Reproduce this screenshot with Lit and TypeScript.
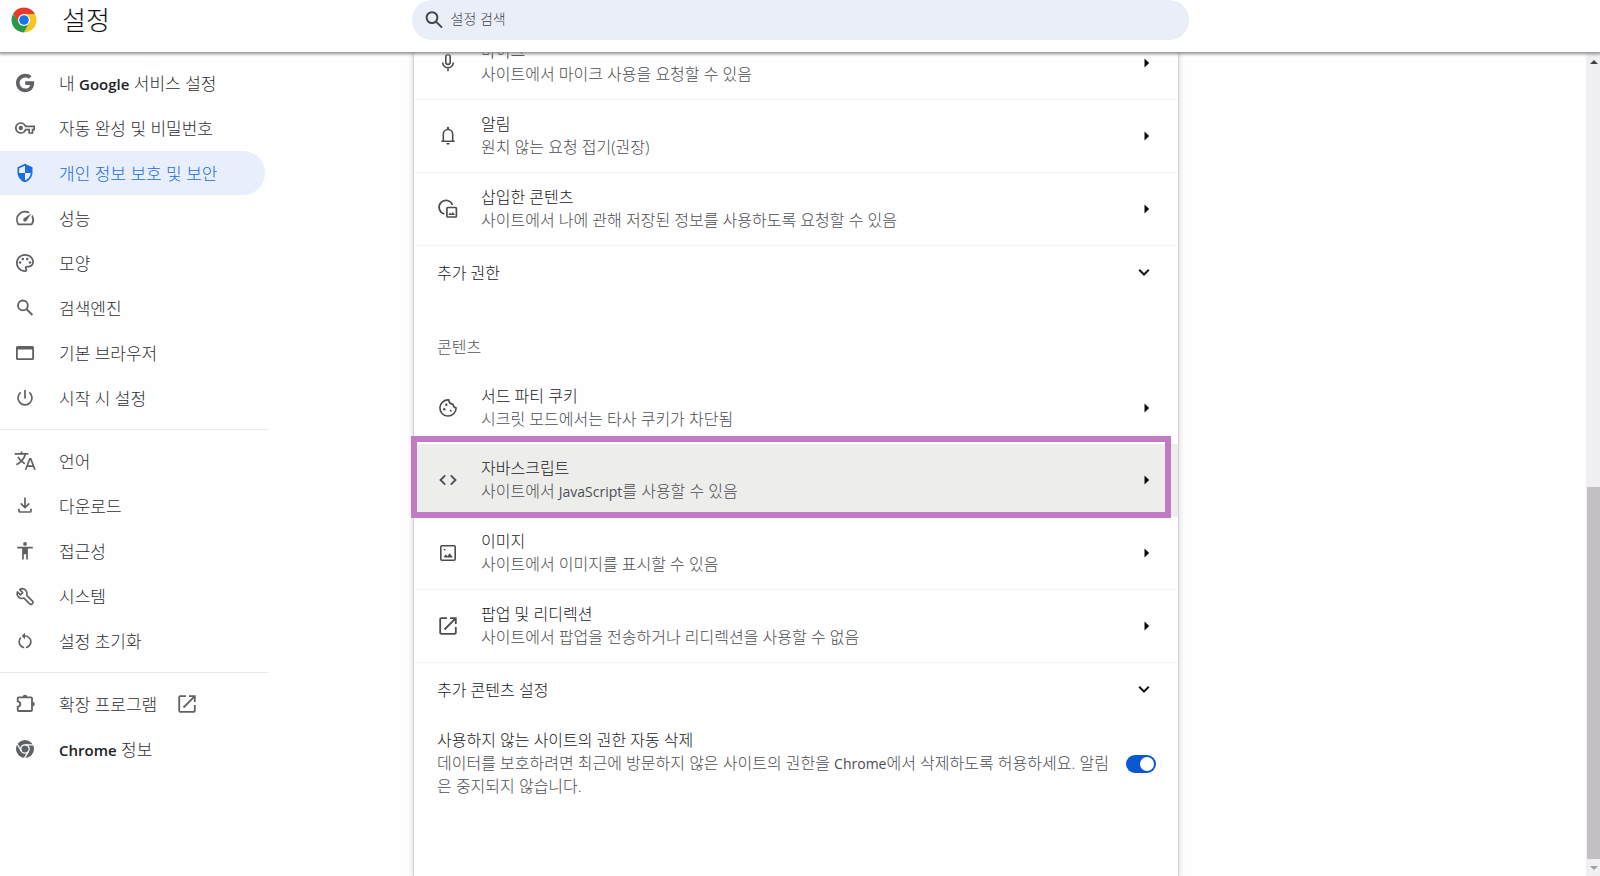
import { LitElement, html, css, svg, nothing, type TemplateResult } from 'lit';
import { customElement, property, state } from 'lit/decorators.js';
import { classMap } from 'lit/directives/class-map.js';

type Glyph = { box?: string; body: TemplateResult };

const SMALL = '-2.4 -2.4 28.8 28.8';
const MEDIUM = '-1.3 -1.3 26.6 26.6';

const GLYPHS: Record<string, Glyph> = {
  google: {
    box: '-0.65 -0.9 25.8 25.8',
    body: svg`<path d="M12.545 10.239v3.821h5.445c-.712 2.315-2.647 3.972-5.445 3.972a6.033 6.033 0 110-12.064c1.498 0 2.866.549 3.921 1.453l2.814-2.814A9.969 9.969 0 0012.545 2C7.021 2 2.543 6.477 2.543 12s4.478 10 10.002 10c8.396 0 10.249-7.85 9.426-11.748z"/>`,
  },
  key: {
    box: SMALL,
    body: svg`<path d="M22 19h-6v-4h-2.68A6.99 6.99 0 017 19c-3.86 0-7-3.14-7-7s3.14-7 7-7c2.72 0 5.17 1.58 6.32 4H24v6h-2v4zm-4-2h2v-4h2v-2H11.94l-.23-.67A5.008 5.008 0 007 7c-2.76 0-5 2.24-5 5s2.24 5 5 5a5.008 5.008 0 004.71-3.33l.23-.67H18v4zM7 14.6a2.6 2.6 0 110-5.2 2.6 2.6 0 010 5.2z"/>`,
  },
  shield: {
    box: SMALL,
    body: svg`<path d="M12 1L3 5v6c0 5.55 3.84 10.74 9 12 5.16-1.26 9-6.45 9-12V5l-9-4zm0 10.99h7c-.53 4.12-3.28 7.79-7 8.94V12H5V6.3l7-3.11v8.8z"/>`,
  },
  speed: {
    box: MEDIUM,
    body: svg`<path d="M20.38 8.57l-1.23 1.85a8 8 0 01-.22 7.58H5.07A8 8 0 0115.58 6.85l1.85-1.23A10 10 0 003.35 19a2 2 0 001.72 1h13.85a2 2 0 001.74-1 10 10 0 00-.27-10.44zm-9.79 6.84a2 2 0 002.83 0l5.66-8.49-8.49 5.66a2 2 0 000 2.83z"/>`,
  },
  palette: {
    box: MEDIUM,
    body: svg`<path d="M12 22C6.49 22 2 17.51 2 12S6.49 2 12 2s10 4.04 10 9c0 3.31-2.69 6-6 6h-1.77c-.28 0-.5.22-.5.5 0 .12.05.23.13.33.41.47.64 1.06.64 1.67A2.5 2.5 0 0112 22zm0-18c-4.41 0-8 3.59-8 8s3.59 8 8 8c.28 0 .5-.22.5-.5a.54.54 0 00-.14-.35c-.41-.46-.63-1.05-.63-1.65a2.5 2.5 0 012.5-2.5H16c2.21 0 4-1.79 4-4 0-3.86-3.59-7-8-7z"/><circle cx="6.5" cy="11.5" r="1.4"/><circle cx="9.5" cy="7.5" r="1.4"/><circle cx="14.5" cy="7.5" r="1.4"/><circle cx="17.5" cy="11.5" r="1.4"/>`,
  },
  search: {
    body: svg`<g fill="none" stroke="currentColor" stroke-width="1.8"><circle cx="9.9" cy="9.4" r="4.9"/><path d="M13.4 13l6 6"/></g>`,
  },
  searchBold: {
    body: svg`<g fill="none" stroke="currentColor" stroke-width="2"><circle cx="10" cy="9.6" r="5.4"/><path d="M13.8 13.4l6.2 6.2"/></g>`,
  },
  window: {
    body: svg`<path fill-rule="evenodd" d="M4.6 5h14.8A1.6 1.6 0 0121 6.600v10.800a1.600 1.600 0 01-1.600 1.600H4.600A1.600 1.600 0 013 17.400V6.600A1.600 1.600 0 014.600 5zM4.800 8.600v8.600h14.400V8.600z"/>`,
  },
  power: {
    body: svg`<g fill="none" stroke="currentColor" stroke-width="1.700"><path d="M12 4v8.500"/><path d="M7.700 6.400a7 7 0 108.600 0"/></g>`,
  },
  translate: {
    body: svg`<g fill="none" stroke="currentColor" stroke-width="1.700"><path d="M1.700 4.900h13.600M8.500 2.600v2.300M12.400 5c-.9 3.700-4.400 8.200-9 10.800M5 7.800c1.500 2.900 4 5.300 6.800 7"/><path d="M12.600 20.800l4.300-11h.8l4.300 11M14 17.200h6.600"/></g>`,
  },
  download: {
    body: svg`<g fill="none" stroke="currentColor" stroke-width="1.700"><path d="M12 3.500v9.800M7.700 9.300L12 13.600l4.300-4.300"/><path d="M6 14.800v2.200q0 1 1 1h10q1 0 1-1v-2.200"/></g>`,
  },
  accessibility: {
    body: svg`<circle cx="12" cy="4.900" r="1.900"/><path d="M4.200 7.800h15.600v1.700h-4.900V20.500h-1.700v-5.300h-2.400v5.300H9.100V9.500H4.200z"/>`,
  },
  wrench: {
    body: svg`<path fill="none" stroke="currentColor" stroke-width="1.600" stroke-linejoin="round" d="M9.300 4.600a5 5 0 014.400 6.800l6 6a1.300 1.300 0 010 1.800l-.9.900a1.300 1.300 0 01-1.800 0l-6-6a5 5 0 01-6.600-6.200l3 3 2.300-2.300-3-3q1.200-.9 2.600-1z"/>`,
  },
  reset: {
    box: SMALL,
    body: svg`<path d="M12 5V2L8 6l4 4V7c3.310 0 6 2.690 6 6 0 2.970-2.170 5.430-5 5.910v2.020c3.950-.490 7-3.850 7-7.930 0-4.420-3.580-8-8-8zm-6 8c0-1.650.670-3.150 1.760-4.240L6.340 7.340A8.014 8.014 0 004 13c0 4.080 3.050 7.440 7 7.930v-2.020c-2.830-.480-5-2.940-5-5.910z"/>`,
  },
  extension: {
    body: svg`<path fill="none" stroke="currentColor" stroke-width="1.800" d="M5.700 5.300H18q1 0 1 1V18q0 1-1 1H5.700q-1 0-1-1v-3.200c3.600-.7 3.600-4.800 0-5.500V6.300q0-1 1-1z"/><path d="M9.700 5a2.300 2.300 0 014.600 0zM19.500 9.800a2.300 2.300 0 010 4.600z"/>`,
  },
  open: {
    body: svg`<g fill="none" stroke="currentColor" stroke-width="1.800"><path d="M11 4.200H5.200q-1 0-1 1v13.600q0 1 1 1h13.600q1 0 1-1V13"/><path d="M14 4.200h5.800V10M19.600 4.400L8.500 15.500"/></g>`,
  },
  chrome: {
    body: svg`<circle cx="12" cy="12" r="9"/><g fill="none" stroke="#fefefe" stroke-width="1.300"><circle cx="12" cy="12" r="4.200"/><path d="M12 7.800h8.300M8.400 14.100L4.200 7M15.600 14.100L11.500 21.200"/></g>`,
  },
  mic: {
    body: svg`<g fill="none" stroke="currentColor" stroke-width="1.600"><rect x="9.800" y="3.800" width="4.400" height="9.600" rx="2.200"/><path d="M6.700 11.500a5.300 5.300 0 0010.600 0M12 16.800v3.400"/></g>`,
  },
  bell: {
    body: svg`<g fill="none" stroke="currentColor" stroke-width="1.600"><path d="M5.300 17.300h13.400M7.300 17V10.200a4.700 4.700 0 019.400 0V17"/></g><path d="M10.900 5V3.900a1.100 1.100 0 012.200 0V5zM10.200 19h3.600a1.800 1.800 0 01-3.600 0z"/>`,
  },
  embedded: {
    body: svg`<g fill="none" stroke="currentColor" stroke-width="1.700"><path d="M8.400 17A6.900 6.900 0 1116.500 8"/><rect x="10.900" y="10.500" width="9.500" height="9.500" rx="1"/></g><path d="M12.300 18l1.800-2.400 1.200 1.500 1.500-2 2.200 2.900z"/>`,
  },
  cookie: {
    body: svg`<path fill="none" stroke="currentColor" stroke-width="1.600" stroke-linejoin="round" d="M12.800 3.900a8.100 8.100 0 107.300 8 3.600 3.600 0 01-3-3.600 4.600 4.600 0 01-4.300-4.400z"/><circle cx="10.300" cy="8.800" r="1.200"/><circle cx="8.300" cy="13.300" r="1.200"/><circle cx="14.700" cy="14.800" r="1"/>`,
  },
  code: {
    body: svg`<path fill="none" stroke="currentColor" stroke-width="1.800" d="M9.200 7.300L4.500 12l4.700 4.700M14.800 7.300l4.700 4.700-4.700 4.700"/>`,
  },
  image: {
    body: svg`<rect x="4.800" y="4.800" width="14.400" height="14.400" rx="1.200" fill="none" stroke="currentColor" stroke-width="1.600"/><path d="M7.500 16.500l2.300-3.200 1.600 1.900 2.400-3 3 4.300z"/><circle cx="8.500" cy="8.700" r=".9"/>`,
  },
  arrow: { body: svg`<path d="M9.500 7.500v9L14.200 12z"/>` },
  chevron: {
    body: svg`<path fill="none" stroke="currentColor" stroke-width="2" d="M7.200 9.800l4.800 4.700 4.800-4.700"/>`,
  },
};

const icon = (name: string) => html`<svg
  class="icon"
  viewBox=${GLYPHS[name].box ?? '0 0 24 24'}
  aria-hidden="true"
>${GLYPHS[name].body}</svg>`;

const latin = (text: string) =>
  text
    .split(/([A-Za-z]+)/)
    .map((part) => (/^[A-Za-z]/.test(part) ? html`<span class="latin">${part}</span>` : part));

const base = css`
  * {
    box-sizing: border-box;
  }
  .icon {
    display: block;
    flex: none;
    width: 24px;
    height: 24px;
    fill: currentColor;
  }
`;

@customElement('settings-menu')
class SettingsMenu extends LitElement {
  @state() private current = '개인 정보 보호 및 보안';

  private groups = [
    [
      ['google', '내 Google 서비스 설정'],
      ['key', '자동 완성 및 비밀번호'],
      ['shield', '개인 정보 보호 및 보안'],
      ['speed', '성능'],
      ['palette', '모양'],
      ['search', '검색엔진'],
      ['window', '기본 브라우저'],
      ['power', '시작 시 설정'],
    ],
    [
      ['translate', '언어'],
      ['download', '다운로드'],
      ['accessibility', '접근성'],
      ['wrench', '시스템'],
      ['reset', '설정 초기화'],
    ],
    [
      ['extension', '확장 프로그램', 'open'],
      ['chrome', 'Chrome 정보'],
    ],
  ];

  static styles = [
    base,
    css`
      :host {
        display: block;
      }
      .menu {
        width: 268px;
        padding-top: 9px;
      }
      .group + .group {
        margin-top: 9px;
        padding-top: 9px;
        border-top: 1px solid #e9e8eb;
      }
      .item {
        display: flex;
        align-items: center;
        height: 44px;
        width: 265px;
        margin-bottom: 1px;
        padding-left: 13px;
        border-radius: 0 22px 22px 0;
        color: #2f3034;
        font-size: 17px;
        text-decoration: none;
        white-space: nowrap;
      }
      .item .icon {
        color: #5f6165;
      }
      .label {
        margin-left: 22px;
        padding-bottom: 2px;
      }
      .label + .icon {
        margin-left: 18px;
      }
      .latin {
        font-size: 15px;
        font-weight: 600;
        color: #202124;
      }
      .current,
      .current .icon {
        color: #1a6fe0;
      }
      .current {
        background: #e8eefc;
      }
    `,
  ];

  render() {
    return html`<nav class="menu" aria-label="설정">
      ${this.groups.map(
        (group) => html`<div class="group">
          ${group.map(
            ([glyph, label, extra]) => html`<a
              class=${classMap({ item: true, current: label === this.current })}
              href="#"
              @click=${(e: Event) => {
                e.preventDefault();
                this.current = label;
              }}
              >${icon(glyph)}<span class="label">${latin(label)}</span>${extra ? icon(extra) : nothing}</a
            >`
          )}
        </div>`
      )}
    </nav>`;
  }
}

@customElement('site-row')
class SiteRow extends LitElement {
  @property() glyph = '';
  @property() heading = '';
  @property() detail = '';
  @property({ type: Boolean }) marked = false;

  static styles = [
    base,
    css`
      :host {
        display: block;
        border-bottom: 1px solid #f3f2f5;
      }
      .row {
        position: relative;
        display: flex;
        align-items: center;
        width: 100%;
        min-height: 72px;
        padding: 0 19px 0 22px;
        border: 0;
        background: none;
        font: inherit;
        text-align: left;
        color: #4c4d52;
      }
      .text {
        flex: 1;
        margin-left: 21px;
        line-height: 23px;
      }
      .heading,
      .detail {
        display: block;
      }
      .heading {
        color: #17181b;
      }
      .latin {
        font-size: 14px;
        font-weight: 400;
      }
      .text + .icon {
        color: #0c0c0e;
      }
      .marked {
        background: #ededeb;
      }
      .frame {
        position: absolute;
        inset: -8px 7px -2px -3px;
        border: 6px solid #c17bc4;
        pointer-events: none;
      }
    `,
  ];

  render() {
    return html`<button class=${classMap({ row: true, marked: this.marked })}>
      ${icon(this.glyph)}
      <span class="text">
        <span class="heading">${this.heading}</span>
        <span class="detail">${latin(this.detail)}</span>
      </span>
      ${icon('arrow')} ${this.marked ? html`<span class="frame"></span>` : nothing}
    </button>`;
  }
}

@customElement('app-root')
class AppRoot extends LitElement {
  @state() private autoRemove = true;

  static styles = [
    base,
    css`
      :host {
        display: flex;
        flex-direction: column;
        height: 100vh;
        overflow: hidden;
        background: #fefefe;
        color: #17181b;
        font-family: 'Open Sans', 'Noto Sans CJK KR', sans-serif;
        font-size: 16px;
        font-weight: 300;
      }
      .header {
        position: relative;
        z-index: 1;
        flex: none;
        display: grid;
        grid-template-columns: 1fr minmax(0, 777px) 1fr;
        height: 52px;
        background: #fff;
        box-shadow: 0 1px 3px 1px #8f8f91;
      }
      .brand {
        display: flex;
        align-items: center;
        height: 40px;
        padding-left: 11px;
        gap: 25px;
      }
      .logo {
        width: 26px;
        height: 26px;
      }
      .title {
        margin: 0;
        font-size: 26px;
        font-weight: 300;
        line-height: 40px;
        color: #111;
      }
      .search {
        display: flex;
        align-items: center;
        height: 40px;
        padding-left: 10px;
        gap: 5px;
        border-radius: 20px;
        background: #eaeef7;
        color: #45464c;
      }
      .field {
        flex: 1;
        height: 40px;
        padding: 0 0 3px;
        border: 0;
        outline: 0;
        background: none;
        font: inherit;
        font-size: 14px;
        color: inherit;
      }
      .field::placeholder {
        color: #43444c;
        opacity: 1;
      }
      .body {
        flex: 1;
        min-height: 0;
        display: grid;
        grid-template-columns: 1fr minmax(0, 764px) 1fr 14px;
        overflow: hidden;
      }
      .card {
        margin: -25px -3px 0 3px;
        background: #fefefe;
        box-shadow: 0 0 0 1px #d3d1d5, 0 0 6px 1px #d5d3d8;
      }
      .more {
        display: flex;
        align-items: center;
        justify-content: space-between;
        width: 100%;
        height: 54px;
        padding: 0 22px 2px 23px;
        border: 0;
        background: none;
        font: inherit;
        color: #17181b;
      }
      .section {
        margin: 35px 0 13px;
        padding-left: 23px;
        font-size: 16px;
        font-weight: 300;
        line-height: 24px;
        color: #55565b;
      }
      .last {
        border: 0;
      }
      .auto {
        display: flex;
        align-items: center;
        padding: 12px 22px 0 23px;
        line-height: 23px;
      }
      .copy {
        flex: 1;
        margin-right: 14px;
        color: #4c4d52;
      }
      .line {
        display: block;
      }
      .strong {
        color: #17181b;
      }
      .latin {
        font-size: 14px;
        font-weight: 400;
      }
      .toggle {
        appearance: none;
        flex: none;
        display: flex;
        align-items: center;
        width: 30px;
        height: 18px;
        margin: 0;
        padding: 0 2px;
        border-radius: 9px;
        background: #9a9ba0;
      }
      .toggle::before {
        content: '';
        width: 14px;
        height: 14px;
        border-radius: 50%;
        background: #fff;
      }
      .toggle:checked {
        justify-content: flex-end;
        background: #0b57d0;
      }
      .scroll {
        grid-column: 4;
        display: flex;
        flex-direction: column;
        background: #f0eff1;
      }
      .cap {
        display: block;
        width: 14px;
        height: 17px;
        fill: #3f3f41;
      }
      .dim {
        fill: #a0a0a2;
      }
      .before {
        flex: 418;
      }
      .thumb {
        flex: 372;
        margin-left: 1px;
        background: #c2c0c3;
      }
    `,
  ];

  render() {
    return html`
      <header class="header">
        <div class="brand">
          <svg class="logo" viewBox="0 0 26 26" aria-hidden="true">
            <path fill="#e33b2e" d="M13 13L2.170 6.750A12.500 12.500 0 0123.830 6.750z" />
            <path fill="#fcc31e" d="M13 7h10.970A12.500 12.500 0 0113 25.500l5.200-9.500z" />
            <path fill="#269a48" d="M2.100 6.880A12.500 12.500 0 0013 25.500L18.200 16 7.800 16z" />
            <path fill="#e33b2e" d="M2.170 6.750L7.800 16 13 7z" />
            <path fill="#269a48" d="M2.170 6.750L7.800 16l3 2L4 16z" />
            <circle cx="13" cy="13" r="6" fill="#fff" />
            <circle cx="13" cy="13" r="4.800" fill="#1a73e8" />
          </svg>
          <h1 class="title">설정</h1>
        </div>
        <label class="search">
          ${icon('searchBold')}
          <input class="field" type="search" placeholder="설정 검색" aria-label="설정 검색" />
        </label>
      </header>
      <div class="body">
        <settings-menu></settings-menu>
        <main class="card">
          <site-row glyph="mic" heading="마이크" detail="사이트에서 마이크 사용을 요청할 수 있음"></site-row>
          <site-row glyph="bell" heading="알림" detail="원치 않는 요청 접기(권장)"></site-row>
          <site-row
            glyph="embedded"
            heading="삽입한 콘텐츠"
            detail="사이트에서 나에 관해 저장된 정보를 사용하도록 요청할 수 있음"
          ></site-row>
          <button class="more">추가 권한 ${icon('chevron')}</button>
          <h2 class="section">콘텐츠</h2>
          <site-row
            class="last"
            glyph="cookie"
            heading="서드 파티 쿠키"
            detail="시크릿 모드에서는 타사 쿠키가 차단됨"
          ></site-row>
          <site-row
            glyph="code"
            heading="자바스크립트"
            detail="사이트에서 JavaScript를 사용할 수 있음"
            marked
          ></site-row>
          <site-row glyph="image" heading="이미지" detail="사이트에서 이미지를 표시할 수 있음"></site-row>
          <site-row
            glyph="open"
            heading="팝업 및 리디렉션"
            detail="사이트에서 팝업을 전송하거나 리디렉션을 사용할 수 없음"
          ></site-row>
          <button class="more">추가 콘텐츠 설정 ${icon('chevron')}</button>
          <div class="auto">
            <label class="copy" for="auto-remove">
              <span class="line strong">사용하지 않는 사이트의 권한 자동 삭제</span>
              <span class="line"
                >${latin(
                  '데이터를 보호하려면 최근에 방문하지 않은 사이트의 권한을 Chrome에서 삭제하도록 허용하세요. 알림은 중지되지 않습니다.'
                )}</span
              >
            </label>
            <input
              id="auto-remove"
              class="toggle"
              type="checkbox"
              .checked=${this.autoRemove}
              @change=${(e: Event) => (this.autoRemove = (e.target as HTMLInputElement).checked)}
            />
          </div>
        </main>
        <div class="scroll" aria-hidden="true">
          <svg class="cap" viewBox="0 0 14 17"><path d="M4 12l4-4 4 4z" /></svg>
          <div class="before"></div>
          <div class="thumb"></div>
          <svg class="cap dim" viewBox="0 0 14 17"><path d="M4 7l4 4 4-4z" /></svg>
        </div>
      </div>
    `;
  }
}
